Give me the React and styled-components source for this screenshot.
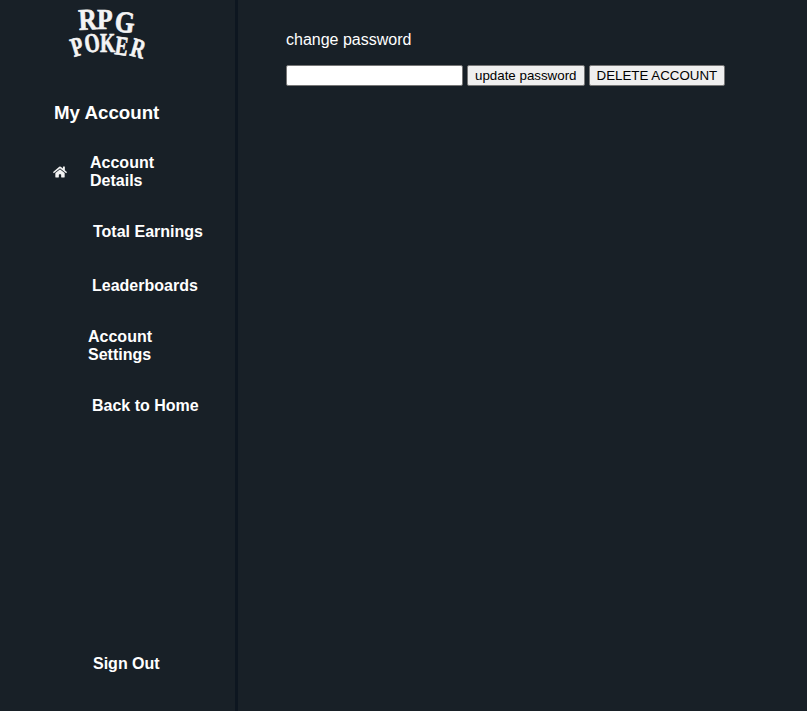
import React from 'react';
import styled, {createGlobalStyle} from "styled-components";
import {FaHome} from "react-icons/fa";

const GlobalStyle = createGlobalStyle`
  html, body {
    margin: 0;
    height: 100%;
    background: #182027;
    font-family: "Liberation Sans", Arial, sans-serif;
  }
`;

const Page = styled.div`
  display: flex;
  height: 711px;
  background: #182027;
  overflow: hidden;
`;

const Sidebar = styled.aside`
  display: flex;
  flex-direction: column;
  box-sizing: border-box;
  width: 238px;
  height: 100%;
  padding-bottom: 38px;
  border-right: 3px solid #0d1620;
`;

const LogoBox = styled.div`
  height: 64px;
  padding-left: 62px;
`;

const Title = styled.h3`
  margin: 37px 0 0 54px;
  color: #fff;
  font-size: 18.72px;
  line-height: 24px;
  font-weight: 700;
`;

const Nav = styled.nav`
  display: flex;
  flex-direction: column;
  margin-top: 29px;
`;

const NavItem = styled.a`
  position: relative;
  display: block;
  width: 112px;
  margin-top: ${({$top}) => $top || 0}px;
  margin-left: ${({$left}) => $left}px;
  color: #fff;
  font-size: 16px;
  line-height: 18px;
  font-weight: 700;
  white-space: pre-line;
  cursor: pointer;
`;

const HomeIcon = styled(FaHome)`
  position: absolute;
  left: -37px;
  top: 11px;
  width: 14px;
  height: 14px;
  color: #f2f2f2;
`;

const SignOut = styled(NavItem)`
  margin-top: auto;
`;

const Main = styled.main`
  flex: 1;
  padding: 31px 0 0 48px;
`;

const Label = styled.div`
  color: #fff;
  font-size: 16px;
  line-height: 18px;
`;

const Form = styled.div`
  display: flex;
  gap: 4px;
  margin-top: 16px;
`;

const PasswordInput = styled.input`
  box-sizing: border-box;
  width: 177px;
  height: 21px;
  padding: 1px 2px;
  background: #fff;
  border: 1px solid #767676;
  border-radius: 2px;
`;

const Button = styled.button`
  box-sizing: border-box;
  height: 21px;
  padding: 1px 7px;
  background: #efefef;
  border: 1px solid #767676;
  border-radius: 2px;
  color: #000;
  font-family: "Liberation Sans", Arial, sans-serif;
  font-size: 13.33px;
`;

// arched wordmark, one glyph at a time: [letter, x, y, rotation]
const rpgLetters = [
    ['R', 17, 30, -3],
    ['P', 35, 29, 0],
    ['G', 52, 31, 6],
];
const pokerLetters = [
    ['P', 12, 57, -17],
    ['O', 24, 53, -9],
    ['K', 38, 52, 0],
    ['E', 52, 54, 8],
    ['R', 67, 55, 16],
];

const Logo = () => (
    <svg width="90" height="64" viewBox="0 0 90 64" fill="#f4f4f4" stroke="#f4f4f4" strokeWidth="0.7" fontFamily="Liberation Serif, serif" fontWeight="700">
        {rpgLetters.map(([letter, x, y, r]) => (
            <text key={letter} fontSize="30" transform={`translate(${x} ${y}) rotate(${r}) scale(0.85 1)`}>{letter}</text>
        ))}
        {pokerLetters.map(([letter, x, y, r], i) => (
            <text key={i} fontSize="27" transform={`translate(${x} ${y}) rotate(${r}) scale(0.72 1)`}>{letter}</text>
        ))}
    </svg>
);

const App = () => {
    return (
        <Page>
            <GlobalStyle/>
            <Sidebar>
                <LogoBox>
                    <Logo/>
                </LogoBox>
                <Title>My Account</Title>
                <Nav>
                    <NavItem $left={90}>
                        <HomeIcon/>
                        {"Account\nDetails"}
                    </NavItem>
                    <NavItem $left={93} $top={33}>Total Earnings</NavItem>
                    <NavItem $left={92} $top={36}>Leaderboards</NavItem>
                    <NavItem $left={88} $top={33}>{"Account\nSettings"}</NavItem>
                    <NavItem $left={92} $top={33}>Back to Home</NavItem>
                </Nav>
                <SignOut $left={93}>Sign Out</SignOut>
            </Sidebar>
            <Main>
                <Label>change password</Label>
                <Form>
                    <PasswordInput type="password"/>
                    <Button>update password</Button>
                    <Button>DELETE ACCOUNT</Button>
                </Form>
            </Main>
        </Page>
    );
};

export default App;
